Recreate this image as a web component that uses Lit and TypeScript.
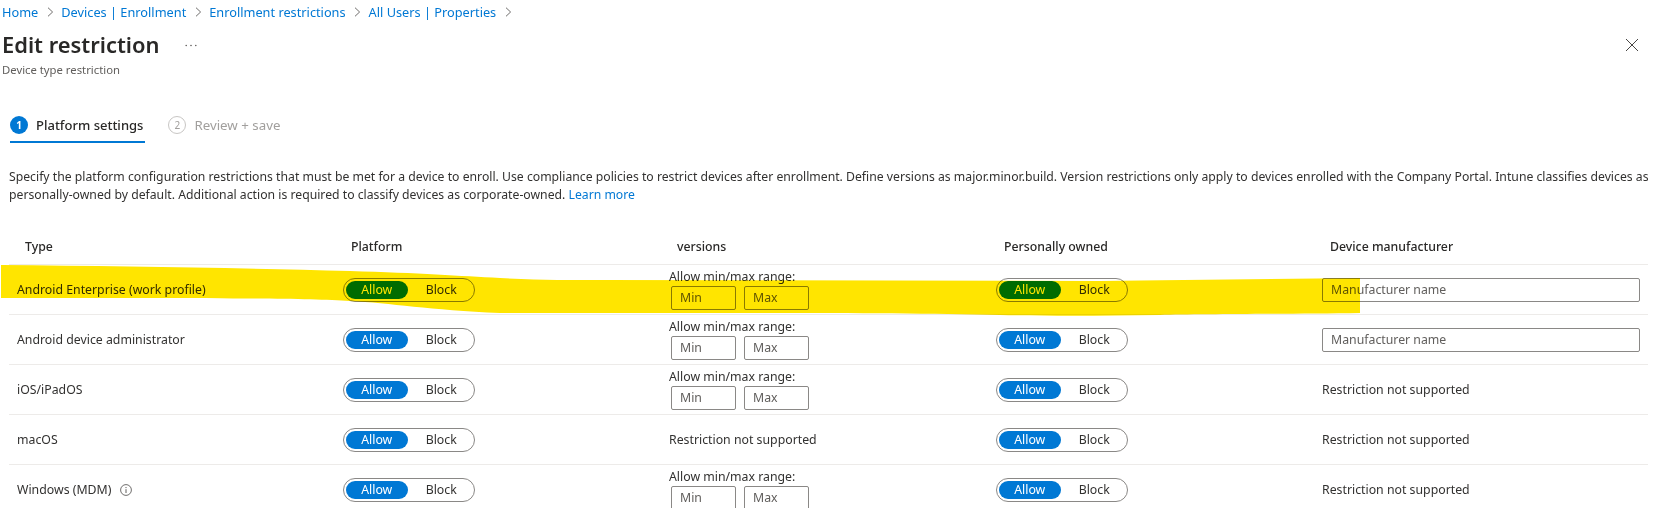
import { LitElement, html, css, nothing } from "lit";
import { customElement } from "lit/decorators.js";

type Row = { name: string; info?: boolean; versions: boolean; maker: boolean };
const rows: Row[] = [
  { name: "Android Enterprise (work profile)", versions: true, maker: true },
  { name: "Android device administrator", versions: true, maker: true },
  { name: "iOS/iPadOS", versions: true, maker: false },
  { name: "macOS", versions: false, maker: false },
  { name: "Windows (MDM)", info: true, versions: true, maker: false },
];
const crumbs = ["Home", "Devices | Enrollment", "Enrollment restrictions", "All Users | Properties"];

@customElement("app-root")
export class AppRoot extends LitElement {
  static styles = css`
    :host { display: block; position: relative; width: 1663px; height: 508px; overflow: hidden; background: #fff;
      font-family: "Noto Sans", "Open Sans", sans-serif; font-size: 12.3px; color: #323130; }
    .crumbs { display: flex; align-items: center; height: 24px; padding-left: 2px; color: #0078d4; font-size: 12.75px; white-space: nowrap; }
    .chev { margin: 0 7.5px 0 8.5px; display: block; }
    .title { display: flex; align-items: center; height: 34px; margin-top: 4px; padding: 0 25px 0 2px; }
    h1 { margin: 0; font-size: 21.9px; font-weight: 600; color: #292827; line-height: 34px; }
    .more { margin-left: 26px; display: block; }
    .close { margin-left: auto; display: block; }
    .sub { padding-left: 2px; font-size: 11.3px; color: #605e5c; line-height: 16px; }
    .tabs { display: flex; margin-top: 38px; padding-left: 10px; height: 27px; }
    .tab { display: flex; align-items: flex-start; gap: 8px; font-size: 13px; line-height: 18px; height: 27px; box-sizing: border-box; }
    .tab.on { font-weight: 500; color: #292827; border-bottom: 2px solid #0078d4; padding-right: 2px; }
    .tab.off { color: #a19f9d; margin-left: 23px; font-size: 13.3px; }
    .dot { width: 18px; height: 18px; box-sizing: border-box; border-radius: 50%; display: flex; align-items: center; justify-content: center; font-size: 10px; }
    .on .dot { background: #0078d4; color: #fff; font-weight: 700; }
    .off .dot { border: 1px solid #c8c6c4; color: #a19f9d; }
    .intro { margin: 25px 0 0 9px; line-height: 18px; font-size: 12.22px; white-space: nowrap; }
    .intro a { color: #0078d4; }
    .table { margin: 24px 0 0 9px; width: 1639px; }
    .row { display: grid; grid-template-columns: 342px 326px 327px 326px 1fr; height: 50px; box-sizing: border-box; border-top: 1px solid #edebe9; align-items: center; }
    .head { height: 36px; border-top: 0; font-weight: 500; color: #292827; }
    .head div:first-child { padding-left: 16px; }
    .name { padding-left: 8px; display: flex; align-items: center; gap: 9px; }
    .toggle { width: 132px; height: 24px; box-sizing: border-box; border: 1px solid #8a8886; border-radius: 12px; display: flex; align-items: center; padding: 0 2px; background: #fff; margin-left: -8px; }
    .toggle span { width: 62px; height: 18px; line-height: 18px; text-align: center; border-radius: 9px; }
    .toggle .a { background: #0078d4; color: #fff; }
    .toggle .b { margin-left: 3px; }
    .range { margin-left: -8px; line-height: 14px; }
    .pair { display: flex; gap: 8px; margin: 2px 0 0 2px; }
    .box { box-sizing: border-box; border: 1px solid #8a8886; border-radius: 2px; height: 24px; line-height: 21px; color: #605e5c; background: #fff; padding-left: 8px; }
    .pair .box { width: 65px; }
    .maker { width: 318px; margin-left: -8px; }
    .na { margin-left: -8px; }
    .paint { position: absolute; left: 0; top: 260px; display: block; mix-blend-mode: multiply; pointer-events: none; }
  `;

  toggle() {
    return html`<div class="toggle"><span class="a">Allow</span><span class="b">Block</span></div>`;
  }

  render() {
    return html`
      <nav class="crumbs">
        ${crumbs.map((c) => html`<span>${c}</span><svg class="chev" width="7" height="10" viewBox="0 0 7 10" fill="none" stroke="#605e5c" stroke-width="0.9"><path d="M1 .7 5.6 5 1 9.3"/></svg>`)}
      </nav>
      <div class="title"><h1>Edit restriction</h1>
        <svg class="more" width="12" height="3" viewBox="0 0 12 3" fill="#605e5c"><circle cx="1.2" cy="1.5" r=".8"/><circle cx="6" cy="1.5" r=".8"/><circle cx="10.8" cy="1.5" r=".8"/></svg>
        <svg class="close" width="12" height="12" viewBox="0 0 12 12" stroke="#484644" stroke-width="1"><path d="M0 0l12 12M12 0 0 12"/></svg>
      </div>
      <div class="sub">Device type restriction</div>
      <div class="tabs">
        <div class="tab on"><span class="dot">1</span>Platform settings</div>
        <div class="tab off"><span class="dot">2</span>Review + save</div>
      </div>
      <p class="intro">Specify the platform configuration restrictions that must be met for a device to enroll. Use compliance policies to restrict devices after enrollment. Define versions as major.minor.build. Version restrictions only apply to devices enrolled with the Company Portal. Intune classifies devices as<br>personally-owned by default. Additional action is required to classify devices as corporate-owned. <a>Learn more</a></p>
      <div class="table">
        <div class="row head"><div>Type</div><div>Platform</div><div>versions</div><div>Personally owned</div><div>Device manufacturer</div></div>
        ${rows.map((r) => html`<div class="row">
          <div class="name">${r.name}${r.info
            ? html`<svg width="12" height="12" viewBox="0 0 12 12" fill="none" stroke="#605e5c"><circle cx="6" cy="6" r="5.4" stroke-width=".9"/><path d="M6 5.2V9M6 3v1.1" stroke-width="1"/></svg>`
            : nothing}</div>
          <div>${this.toggle()}</div>
          <div>${r.versions
            ? html`<div class="range">Allow min/max range:<div class="pair"><div class="box">Min</div><div class="box">Max</div></div></div>`
            : html`<div class="na">Restriction not supported</div>`}</div>
          <div>${this.toggle()}</div>
          <div>${r.maker ? html`<div class="box maker">Manufacturer name</div>` : html`<div class="na">Restriction not supported</div>`}</div>
        </div>`)}
      </div>
      <svg class="paint" width="1372" height="64" viewBox="0 0 1372 64"><path fill="#ffe500" d="M1 5 C120 6 240 8 350 11 C420 13 460 16 500 18 C540 20 570 20 600 20 L1100 21 C1180 20 1280 19 1360 18 V53 C1290 54 1200 54 1160 55 C1100 56 1040 56 1000 55 C900 53 800 53 600 53 L500 53 C430 50 390 43 350 41 C300 38 200 38 1 38 Z"/></svg>
    `;
  }
}
